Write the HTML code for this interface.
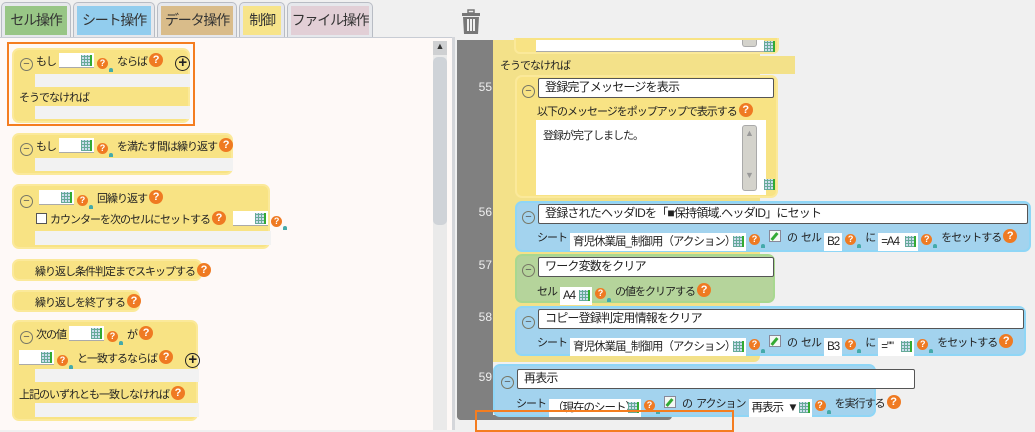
<!DOCTYPE html>
<html><head><meta charset="utf-8"><style>
*{box-sizing:border-box;margin:0;padding:0}
body{width:1035px;height:430px;overflow:hidden;background:#f0f0f0;font-family:"Liberation Sans","Noto Sans CJK JP",sans-serif;font-size:11px;letter-spacing:-1px;word-spacing:2px;color:#222;position:relative}
.a{position:absolute}
.tab{position:absolute;top:2px;height:35px;border:1px solid #b8bcc4;border-bottom:none;border-radius:5px 5px 0 0;background:#e6e8ec;padding:3px}
.tab div{height:29px;line-height:29px;font-size:14px;letter-spacing:-1.2px;text-align:center;color:#333;white-space:nowrap;overflow:hidden}
.blk{position:absolute;background:#f8e384;border:2px solid #fbe99a;border-radius:7px}
.gr{position:absolute;background:#f2f2f2}
.t{position:absolute;white-space:nowrap;line-height:16px}
.g{display:inline-block;width:11px;height:11px;vertical-align:-1px;background:repeating-linear-gradient(90deg,#6a9 0 1px,transparent 1px 3px),repeating-linear-gradient(0deg,#6a9 0 1px,#cde 1px 3px);border-right:2px solid #3a3}
.q{display:inline-block;width:11px;height:11px;border-radius:50%;background:#ef7a22;color:#fff;font-size:9px;letter-spacing:0;line-height:11px;text-align:center;font-weight:bold;vertical-align:-1px;position:relative;margin-right:5px}
.q:after{content:"";position:absolute;right:-5px;bottom:-3px;width:4px;height:4px;background:#4aa;border-radius:2px 2px 0 0}
.Q{display:inline-block;width:14px;height:14px;border-radius:50%;background:#ef7a22;color:#fff;font-size:11px;letter-spacing:0;line-height:14px;text-align:center;font-weight:bold;vertical-align:2px;margin-left:2px}
.m{display:inline-block;width:13px;height:13px;border:1px solid #776;border-radius:50%;text-align:center;line-height:10px;font-size:11px;letter-spacing:0;color:#555;vertical-align:-2px;margin-right:3px}
.p{display:inline-block;width:15px;height:15px;border:1.5px solid #222;border-radius:50%;text-align:center;line-height:12px;font-size:15px;letter-spacing:0;font-weight:bold;vertical-align:-2px}
.ln{position:absolute;left:458px;width:34px;text-align:right;color:#eee;font-size:12px;letter-spacing:0}
.bb{position:absolute;background:#a3d3ee;border:2px solid #8fd6f6;border-radius:7px}
.gb{position:absolute;background:#b5d49b;border:2px solid #a8d890;border-radius:7px}
.ti{position:absolute;background:#fff;border:1px solid #555;border-radius:2px;padding-left:6px;line-height:17px;font-size:12px;letter-spacing:-0.8px;white-space:nowrap}
.w{background:#fff;padding:0 16px 0 3px;display:inline-block;line-height:18px;white-space:nowrap;text-align:left;vertical-align:-4px;position:relative;margin:0 3px;font-size:11.5px}
.w .g{position:absolute;right:2px;top:3px}
.ib{display:inline-block;width:35px;height:15px;background:#fff;border-bottom:1px solid #aaa;vertical-align:-3px;position:relative;margin:0 3px}
.ib .g{position:absolute;right:2px;top:2px}
.e{display:inline-block;width:12px;height:12px;border:1px solid #889;background:#f4f8f4;vertical-align:-1px;position:relative;margin:0 6px 0 4px}
.e:after{content:"";position:absolute;left:3px;top:1px;width:3px;height:9px;background:#3a3;transform:rotate(40deg)}
</style></head><body>
<div class="a" style="left:0;top:0;width:455px;height:430px;background:#f0f0f0"></div>
<div class="tab" style="left:1px;width:70px"><div style="background:#98c686">セル操作</div></div>
<div class="tab" style="left:73px;width:82px"><div style="background:#92cdee">シート操作</div></div>
<div class="tab" style="left:157px;width:80px"><div style="background:#d9bc8a">データ操作</div></div>
<div class="tab" style="left:239px;width:46px"><div style="background:#f7e48a">制御</div></div>
<div class="tab" style="left:287px;width:86px"><div style="background:#e2cfd6">ファイル操作</div></div>
<div class="a" style="left:0;top:37px;width:452px;height:393px;background:#fef9f7;border-top:1px solid #c8ccd4"></div>
<div class="a" style="left:433px;top:41px;width:14px;height:389px;background:#eaeaea"></div>
<div class="a" style="left:433px;top:41px;width:14px;height:14px;background:#cfd0d2;font-size:9px;text-align:center;color:#333;letter-spacing:0">▲</div>
<div class="a" style="left:433px;top:57px;width:14px;height:168px;background:#cfd3d8;border-radius:5px"></div>
<div class="a" style="left:452px;top:37px;width:3px;height:393px;background:#d4d6da"></div>

<div class="blk" style="left:12px;top:48px;width:178px;height:75px"></div>
<div class="t" style="left:20px;top:53px"><span class="m">−</span>もし<span class="ib"><span class="g"></span></span><span class="q">?</span> ならば<span class="Q">?</span> &nbsp;&nbsp;<span class="p">+</span></div>
<div class="gr" style="left:35px;top:74px;width:155px;height:13px"></div>
<div class="t" style="left:19px;top:90px">そうでなければ</div>
<div class="gr" style="left:35px;top:106px;width:155px;height:13px"></div>
<div class="a" style="left:7px;top:42px;width:188px;height:84px;border:2.5px solid #f47d20"></div>

<div class="blk" style="left:12px;top:133px;width:221px;height:42px"></div>
<div class="t" style="left:20px;top:138px"><span class="m">−</span>もし<span class="ib"><span class="g"></span></span><span class="q">?</span> を満たす間は繰り返す<span class="Q">?</span></div>
<div class="gr" style="left:35px;top:158px;width:198px;height:13px"></div>

<div class="blk" style="left:12px;top:184px;width:258px;height:65px"></div>
<div class="t" style="left:20px;top:190px"><span class="m">−</span><span class="ib"><span class="g"></span></span><span class="q">?</span> 回繰り返す<span class="Q">?</span></div>
<div class="t" style="left:36px;top:211px"><span style="display:inline-block;width:11px;height:11px;border:1px solid #555;background:#fff;vertical-align:-1px;margin-right:3px"></span>カウンターを次のセルにセットする<span class="Q">?</span> <span class="ib"><span class="g"></span></span><span class="q">?</span></div>
<div class="gr" style="left:35px;top:231px;width:236px;height:14px"></div>

<div class="blk" style="left:12px;top:259px;width:190px;height:22px"></div>
<div class="t" style="left:35px;top:263px">繰り返し条件判定までスキップする<span class="Q">?</span></div>
<div class="blk" style="left:12px;top:290px;width:128px;height:22px"></div>
<div class="t" style="left:35px;top:294px">繰り返しを終了する<span class="Q">?</span></div>

<div class="blk" style="left:12px;top:320px;width:186px;height:101px"></div>
<div class="t" style="left:20px;top:326px"><span class="m">−</span>次の値<span class="ib"><span class="g"></span></span><span class="q">?</span> が<span class="Q">?</span></div>
<div class="t" style="left:16px;top:350px"><span class="ib"><span class="g"></span></span><span class="q">?</span> と一致するならば<span class="Q">?</span> &nbsp;&nbsp;<span class="p">+</span></div>
<div class="gr" style="left:35px;top:369px;width:164px;height:13px"></div>
<div class="t" style="left:19px;top:386px">上記のいずれとも一致しなければ<span class="Q">?</span></div>
<div class="gr" style="left:35px;top:403px;width:164px;height:14px"></div>

<svg class="a" style="left:461px;top:9px" width="20" height="26" viewBox="0 0 20 26"><rect x="1" y="4" width="18" height="3" fill="#777"/><rect x="7" y="1" width="6" height="3" fill="none" stroke="#777" stroke-width="1.5"/><path d="M2 8h16l-1 17H3z" fill="#777"/><rect x="6" y="10" width="2" height="12" fill="#f0f0f0"/><rect x="9" y="10" width="2" height="12" fill="#f0f0f0"/><rect x="12" y="10" width="2" height="12" fill="#f0f0f0"/></svg>
<div class="a" style="left:456px;top:40px;width:579px;height:390px;background:#f0f0f0"></div>
<div class="a" style="left:457px;top:40px;width:36px;height:380px;background:#808080;border-radius:0 0 0 4px"></div>
<div class="a" style="left:457px;top:415px;width:215px;height:5px;background:#808080;border-radius:0 0 4px 4px"></div>
<div class="a" style="left:493px;top:40px;width:267px;height:322px;background:#f3e189;border-radius:0 0 6px 0"></div>
<div class="a" style="left:493px;top:56px;width:302px;height:18px;background:#f3e189"></div>
<div class="blk" style="left:514px;top:38px;width:265px;height:16px;border-top:none;border-radius:0 0 6px 6px"></div>
<div class="a" style="left:536px;top:40px;width:228px;height:12px;background:#fff;border-bottom:1px solid #aaa"></div>
<div class="a" style="left:742px;top:40px;width:15px;height:7px;background:#d4d3cc;border:1px solid #aaa;border-top:none;border-radius:0 0 3px 3px"></div>
<div class="t" style="left:764px;top:40px"><span class="g"></span></div>
<div class="t" style="left:500px;top:58px">そうでなければ</div>

<div class="ln" style="top:80px">55</div>
<div class="blk" style="left:515px;top:75px;width:263px;height:123px"></div>
<div class="t" style="left:522px;top:81px"><span class="m">−</span></div>
<div class="ti" style="left:538px;top:78px;width:236px;height:20px">登録完了メッセージを表示</div>
<div class="t" style="left:537px;top:103px">以下のメッセージをポップアップで表示する<span class="Q">?</span></div>
<div class="a" style="left:536px;top:120px;width:230px;height:75px;background:#fff"></div>
<div class="t" style="left:543px;top:128px">登録が完了しました。</div>
<div class="a" style="left:742px;top:125px;width:15px;height:66px;background:#d4d3cc;border:1px solid #aaa;border-radius:3px;font-size:9px;color:#999;text-align:center;line-height:14px;letter-spacing:0">▲<br><br><br>▼</div>
<div class="t" style="left:764px;top:178px"><span class="g"></span></div>

<div class="ln" style="top:205px">56</div>
<div class="bb" style="left:515px;top:201px;width:516px;height:51px"></div>
<div class="t" style="left:522px;top:207px"><span class="m">−</span></div>
<div class="ti" style="left:538px;top:204px;width:490px;height:20px">登録されたヘッダIDを「■保持領域.ヘッダID」にセット</div>
<div class="t" style="left:537px;top:229px">シート<span class="w" style="width:176px">育児休業届_制御用（アクション）<span class="g"></span></span><span class="q">?</span><span class="e"></span>の セル<span class="w" style="padding-right:3px">B2</span><span class="q">?</span> に<span class="w" style="width:40px">=A4<span class="g"></span></span><span class="q">?</span> をセットする<span class="Q">?</span></div>

<div class="ln" style="top:258px">57</div>
<div class="gb" style="left:515px;top:254px;width:260px;height:49px"></div>
<div class="t" style="left:522px;top:260px"><span class="m">−</span></div>
<div class="ti" style="left:538px;top:257px;width:236px;height:20px">ワーク変数をクリア</div>
<div class="t" style="left:537px;top:283px">セル<span class="w" style="width:32px">A4<span class="g"></span></span><span class="q">?</span> の値をクリアする<span class="Q">?</span></div>

<div class="ln" style="top:310px">58</div>
<div class="bb" style="left:515px;top:306px;width:511px;height:50px"></div>
<div class="t" style="left:522px;top:312px"><span class="m">−</span></div>
<div class="ti" style="left:538px;top:309px;width:486px;height:20px">コピー登録判定用情報をクリア</div>
<div class="t" style="left:537px;top:334px">シート<span class="w" style="width:176px">育児休業届_制御用（アクション）<span class="g"></span></span><span class="q">?</span><span class="e"></span>の セル<span class="w" style="padding-right:3px">B3</span><span class="q">?</span> に<span class="w" style="width:36px">=""<span class="g"></span></span><span class="q">?</span> をセットする<span class="Q">?</span></div>

<div class="ln" style="top:370px">59</div>
<div class="bb" style="left:493px;top:364px;width:383px;height:53px"></div>
<div class="t" style="left:501px;top:372px"><span class="m">−</span></div>
<div class="ti" style="left:517px;top:369px;width:398px;height:20px">再表示</div>
<div class="t" style="left:516px;top:395px">シート<span class="w" style="width:92px">（現在のシート）<span class="g"></span></span><span class="q">?</span><span class="e"></span>の アクション<span class="w" style="width:63px">再表示 ▼<span class="g"></span></span><span class="q">?</span> を実行する<span class="Q">?</span></div>
<div class="a" style="left:475px;top:410px;width:259px;height:22px;border:2.5px solid #f47d20"></div>
</body></html>
